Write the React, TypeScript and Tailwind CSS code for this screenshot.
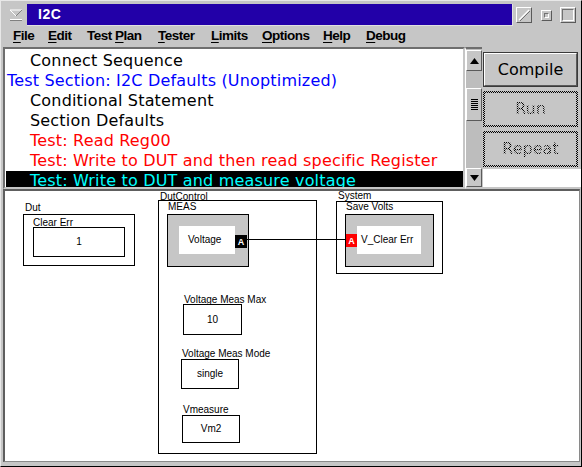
import React from "react";

const raised =
  "border border-t-white border-l-white border-b-[#5a5a5a] border-r-[#5a5a5a]";

const menu = [
  { pre: "", u: "F", post: "ile", w: 35 },
  { pre: "", u: "E", post: "dit", w: 39 },
  { pre: "Test ", u: "P", post: "lan", w: 71 },
  { pre: "", u: "T", post: "ester", w: 53 },
  { pre: "", u: "L", post: "imits", w: 51 },
  { pre: "", u: "O", post: "ptions", w: 61 },
  { pre: "", u: "H", post: "elp", w: 43 },
  { pre: "", u: "D", post: "ebug", w: 50 },
];

const rows: { t: string; c: string; indent: boolean; sel?: boolean }[] = [
  { t: "Connect Sequence", c: "text-black", indent: true },
  { t: "Test Section: I2C Defaults (Unoptimized)", c: "text-[#0000ff]", indent: false },
  { t: "Conditional Statement", c: "text-black", indent: true },
  { t: "Section Defaults", c: "text-black", indent: true },
  { t: "Test: Read Reg00", c: "text-[#ff0000]", indent: true },
  { t: "Test: Write to DUT and then read specific Register", c: "text-[#ff0000]", indent: true },
  { t: "Test: Write to DUT and measure voltage", c: "text-[#00ffff]", indent: true, sel: true },
];

function Stipple({ label, top }: { label: string; top: number }) {
  return (
    <div
      className={`h-[36px] p-[2px] bg-[repeating-conic-gradient(#000_0_25%,#c6c6c6_0_50%)] bg-[length:2px_2px] ${top ? "mt-[4px]" : ""}`}
    >
      <div className="w-full h-full bg-[#c6c6c6] flex items-center justify-center">
        <span className="text-[16px] font-['DejaVu_Sans',sans-serif] bg-[repeating-conic-gradient(#000_0_25%,transparent_0_50%)] bg-[length:2px_2px] bg-clip-text text-transparent">
          {label}
        </span>
      </div>
    </div>
  );
}

export default function App() {
  return (
    <div className="w-[582px] h-[467px] bg-[#c6c6c6] flex flex-col border-t border-l border-t-[#e8e8e8] border-l-[#e8e8e8] border-r border-b border-r-black border-b-black overflow-hidden font-['Liberation_Sans',Arial,sans-serif]">
      {/* title bar */}
      <div className="flex items-center h-[22px] mt-[3px] shrink-0">
        <div className="ml-[3px] w-[23px] h-[22px] flex items-center justify-center">
          <svg width="14" height="12" viewBox="0 0 14 12">
            <path d="M1 1 L13 1 L7 7 Z" fill="none" stroke="#ffffff" strokeWidth="1" />
            <path d="M13 1 L7 7" stroke="#808080" strokeWidth="1" />
            <line x1="1" y1="10.5" x2="13" y2="10.5" stroke="#ffffff" strokeWidth="1" />
            <line x1="1" y1="11.5" x2="13" y2="11.5" stroke="#808080" strokeWidth="1" />
          </svg>
        </div>
        <div className="w-[486px] h-[22px] bg-[#2200a8] border-r border-b border-r-[#e0e0e0] border-b-[#e0e0e0] flex items-center pl-[11px]">
          <span className="text-white text-[14px] font-bold tracking-[0.5px]">I2C</span>
        </div>
        <div className={`ml-[3px] w-[16px] h-[16px] ${raised} relative`}>
          <svg width="14" height="14" viewBox="0 0 14 14" className="absolute left-0 top-0">
            <line x1="2" y1="12" x2="12" y2="2" stroke="#ffffff" strokeWidth="1.2" />
            <line x1="3" y1="13" x2="13" y2="3" stroke="#707070" strokeWidth="1" />
          </svg>
        </div>
        <div className={`ml-[9px] w-[11px] h-[11px] ${raised} flex items-center justify-center`}>
          <div className="w-[5px] h-[5px] border border-t-[#707070] border-l-[#707070] border-b-white border-r-white" />
        </div>
        <div className={`ml-[8px] w-[16px] h-[16px] ${raised} flex items-center justify-center`}>
          <div className="w-[12px] h-[12px] border border-t-[#707070] border-l-[#707070] border-b-white border-r-white" />
        </div>
      </div>

      {/* menu bar */}
      <div className="flex items-center h-[21px] pl-[12px] shrink-0 text-[13.5px] font-bold tracking-[-0.5px] text-black">
        {menu.map((m) => (
          <span key={m.u + m.post} className="shrink-0 whitespace-pre" style={{ width: m.w }}>
            {m.pre}
            <span className="underline underline-offset-2">{m.u}</span>
            {m.post}
          </span>
        ))}
      </div>

      {/* upper panel */}
      <div className="flex h-[142px] shrink-0 ml-[2px]">
        <div className="w-[462px] h-full border-2 border-t-[#6e6e6e] border-l-[#6e6e6e] border-b-[#c6c6c6] border-r-[#c6c6c6] bg-white overflow-hidden pt-[2px] font-['DejaVu_Sans',sans-serif] text-[16px] leading-[20px] tracking-[0.18px]">
          {rows.map((r) => (
            <div
              key={r.t}
              className={`h-[20px] ml-[1px] whitespace-nowrap ${r.sel ? "bg-black" : ""} ${r.indent ? "pl-[24px]" : "pl-[1px]"} ${r.c}`}
            >
              {r.t}
            </div>
          ))}
        </div>
        <div className="w-[17px] h-full flex flex-col border-t-2 border-t-[#6e6e6e] border-b-2 border-b-[#c6c6c6] bg-[#bdbdbd] border-l border-l-white">
          <div className={`h-[21px] mt-[1px] bg-[#c6c6c6] ${raised} flex items-center justify-center`}>
            <svg width="9" height="6" viewBox="0 0 9 6">
              <path d="M0 6 L4.5 0 L9 6 Z" fill="#000" />
            </svg>
          </div>
          <div className="h-[17px]" />
          <div className={`h-[33px] bg-[#c6c6c6] ${raised} flex flex-col items-center justify-center gap-[1px]`}>
            {[0, 1, 2, 3, 4, 5].map((i) => (
              <div key={i} className="w-[7px] h-[1px] bg-black" />
            ))}
          </div>
          <div className="flex-1" />
          <div className={`h-[19px] bg-[#c6c6c6] ${raised} flex items-center justify-center`}>
            <svg width="9" height="6" viewBox="0 0 9 6">
              <path d="M0 0 L4.5 6 L9 0 Z" fill="#000" />
            </svg>
          </div>
        </div>
        <div className="flex-1 flex flex-col pl-[1px] pr-[3px] pb-[2px]">
          <div className="mt-[5px] h-[35px] border border-[#3a3a3a] p-0">
            <div className={`w-full h-full ${raised} bg-[#c6c6c6] flex items-center justify-center`}>
              <span className="text-[16px] font-['DejaVu_Sans',sans-serif] text-black">Compile</span>
            </div>
          </div>
          <Stipple label="Run" top={1} />
          <Stipple label="Repeat" top={1} />
          <div className="flex-1 mt-[2px] -mr-[3px] bg-white" />
        </div>
      </div>

      {/* canvas */}
      <div className="h-[273px] shrink-0 ml-[2px] mr-[1px] border-l-2 border-t-2 border-l-[#5e5e5e] border-t-[#5e5e5e] border-r border-b border-r-[#8a8a8a] border-b-[#8a8a8a] bg-white relative overflow-hidden text-[10px] leading-[10px] text-black">
        {/* Dut */}
        <div className="absolute left-[20px] top-[12px]">Dut</div>
        <div className="absolute left-[18px] top-[23px] w-[112px] h-[52px] border border-black" />
        <div className="absolute left-[28px] top-[27px]">Clear Err</div>
        <div className="absolute left-[28px] top-[36px] w-[92px] h-[30px] border border-black flex items-center justify-center">1</div>

        {/* DutControl */}
        <div className="absolute left-[155px] top-[1px]">DutControl</div>
        <div className="absolute left-[153px] top-[9px] w-[159px] h-[254px] border border-black" />
        <div className="absolute left-[163px] top-[11px]">MEAS</div>
        <div className="absolute left-[162px] top-[23px] w-[82px] h-[53px] border border-black bg-[#c6c6c6]" />
        <div className="absolute left-[174px] top-[35px] w-[56px] h-[28px] bg-white flex items-center pl-[9px]">Voltage</div>
        <div className="absolute left-[230px] top-[44px] w-[12px] h-[13px] bg-black text-white font-bold text-[9px] flex items-center justify-center">A</div>
        <div className="absolute left-[242px] top-[48px] w-[99px] h-[1px] bg-black" />

        <div className="absolute left-[179px] top-[104px]">Voltage Meas Max</div>
        <div className="absolute left-[178px] top-[113px] w-[59px] h-[31px] border border-black flex items-center justify-center">10</div>
        <div className="absolute left-[177px] top-[158px]">Voltage Meas Mode</div>
        <div className="absolute left-[176px] top-[168px] w-[58px] h-[30px] border border-black flex items-center justify-center">single</div>
        <div className="absolute left-[178px] top-[214px]">Vmeasure</div>
        <div className="absolute left-[177px] top-[224px] w-[58px] h-[28px] border border-black flex items-center justify-center">Vm2</div>

        {/* System */}
        <div className="absolute left-[333px] top-[0px]">System</div>
        <div className="absolute left-[331px] top-[10px] w-[107px] h-[73px] border border-black" />
        <div className="absolute left-[341px] top-[11px]">Save Volts</div>
        <div className="absolute left-[340px] top-[23px] w-[89px] h-[53px] border border-black bg-[#c6c6c6]" />
        <div className="absolute left-[352px] top-[35px] w-[64px] h-[28px] bg-white flex items-center pl-[4px] whitespace-nowrap">V_Clear Err</div>
        <div className="absolute left-[341px] top-[43px] w-[11px] h-[13px] bg-[#ff0000] text-white font-bold text-[9px] flex items-center justify-center">A</div>
      </div>
    </div>
  );
}
